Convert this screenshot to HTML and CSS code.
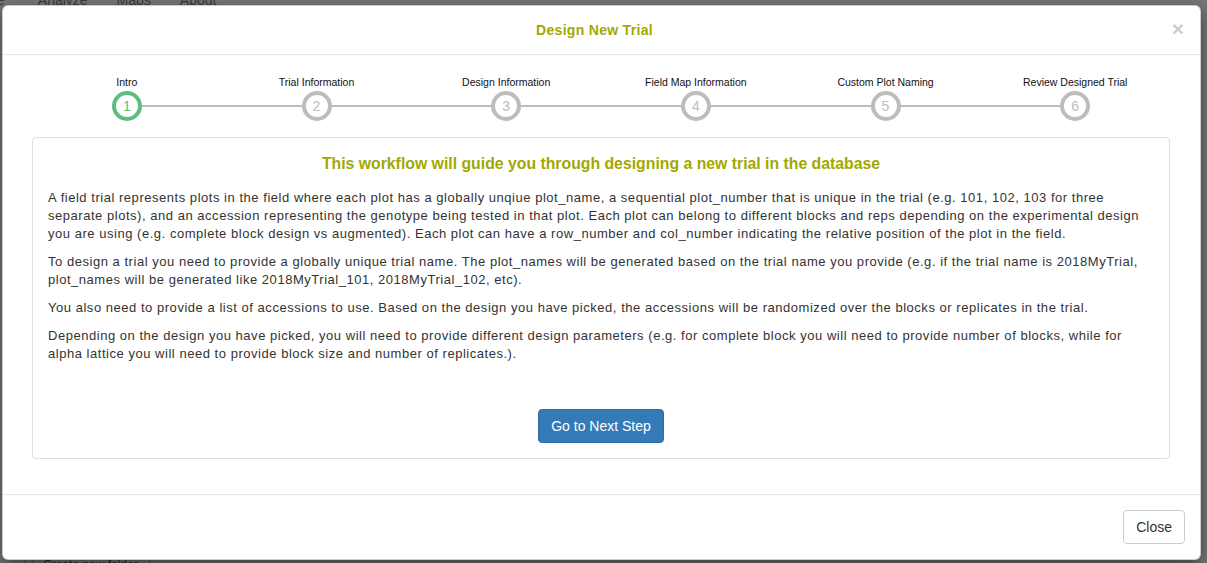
FILE: index.html
```html
<!DOCTYPE html>
<html lang="en">
<head>
<meta charset="utf-8">
<title>Design New Trial</title>
<link rel="stylesheet" href="styles.css">
</head>
<body>
<div class="page">
  <nav class="topnav">
    <span class="nav-item nav-cut">e</span>
    <span class="nav-item">Analyze</span>
    <span class="nav-item">Maps</span>
    <span class="nav-item">About</span>
  </nav>
  <div class="page-bottom">
    <div class="bottom-frame">
      <span class="folder-btn">Create new folder</span>
    </div>
  </div>
</div>

<div class="modal">
  <div class="modal-header">
    <h4 class="modal-title">Design New Trial</h4>
    <span class="close">&times;</span>
  </div>
  <div class="modal-body">
    <div class="steps">
      <div class="step active"><div class="step-label">Intro</div><div class="step-dot">1</div></div>
      <div class="step"><div class="step-label">Trial Information</div><div class="step-dot">2</div></div>
      <div class="step"><div class="step-label">Design Information</div><div class="step-dot">3</div></div>
      <div class="step"><div class="step-label">Field Map Information</div><div class="step-dot">4</div></div>
      <div class="step"><div class="step-label">Custom Plot Naming</div><div class="step-dot">5</div></div>
      <div class="step last"><div class="step-label">Review Designed Trial</div><div class="step-dot">6</div></div>
    </div>
    <div class="panel">
      <h3 class="panel-heading">This workflow will guide you through designing a new trial in the database</h3>
      <p>A field trial represents plots in the field where each plot has a globally unqiue plot_name, a sequential plot_number that is unique in the trial (e.g. 101, 102, 103 for three separate plots), and an accession representing the genotype being tested in that plot. Each plot can belong to different blocks and reps depending on the experimental design you are using (e.g. complete block design vs augmented). Each plot can have a row_number and col_number indicating the relative position of the plot in the field.</p>
      <p>To design a trial you need to provide a globally unique trial name. The plot_names will be generated based on the trial name you provide (e.g. if the trial name is 2018MyTrial, plot_names will be generated like 2018MyTrial_101, 2018MyTrial_102, etc).</p>
      <p>You also need to provide a list of accessions to use. Based on the design you have picked, the accessions will be randomized over the blocks or replicates in the trial.</p>
      <p>Depending on the design you have picked, you will need to provide different design parameters (e.g. for complete block you will need to provide number of blocks, while for alpha lattice you will need to provide block size and number of replicates.).</p>
      <div class="panel-actions">
        <button class="btn btn-primary">Go to Next Step</button>
      </div>
    </div>
  </div>
  <div class="modal-footer">
    <button class="btn btn-default">Close</button>
  </div>
</div>
</body>
</html>
```

FILE: styles.css
```css
* { box-sizing: border-box; }

html, body {
  margin: 0;
  height: 100%;
}

body {
  background: #777;
  font-family: "Liberation Sans", Arial, sans-serif;
  color: #333;
  overflow: hidden;
}

.page {
  height: 563px;
  display: flex;
  flex-direction: column;
  justify-content: space-between;
}

.topnav {
  display: flex;
  height: 6px;
  align-items: flex-end;
  font-size: 14px;
  line-height: 16px;
  color: #3a3a3a;
}

.nav-item {
  margin-right: 29px;
  margin-bottom: -2px;
}

.nav-cut { margin-left: -3px; margin-right: 33px; }

.page-bottom {
  height: 8px;
  padding-left: 24px;
  overflow: hidden;
}

.bottom-frame {
  border-left: 1px solid #5a5a5a;
  padding-left: 7px;
  height: 20px;
}

.folder-btn {
  display: inline-block;
  border-left: 1px solid #5a5a5a;
  border-right: 1px solid #5a5a5a;
  padding: 0 11px 0 10px;
  font-size: 12px;
  line-height: 14px;
  margin-top: 2px;
  color: #2a2a2a;
}

.modal {
  position: absolute;
  top: 5px;
  left: 2px;
  width: 1199px;
  background: #fff;
  border: 1px solid rgba(0,0,0,0.2);
  border-radius: 6px;
  box-shadow: 0 5px 15px rgba(0,0,0,0.5);
}

.modal-header {
  display: flex;
  align-items: flex-start;
  padding: 14px 15px;
  border-bottom: 1px solid #e5e5e5;
}

.modal-title {
  flex: 1;
  margin: 0;
  text-align: center;
  font-size: 14px;
  letter-spacing: 0.3px;
  line-height: 20px;
  font-weight: bold;
  color: #a2a800;
}

.close {
  width: 14px;
  margin-top: -2px;
  margin-right: 0;
  font-size: 21px;
  font-weight: bold;
  line-height: 21px;
  color: #000;
  opacity: 0.2;
  text-align: center;
}

.modal-body {
  padding: 21px 30px 35px 29px;
}

.steps {
  display: flex;
}

.step {
  flex: 1;
  position: relative;
  display: flex;
  flex-direction: column;
  align-items: center;
}

.step::after {
  content: "";
  position: absolute;
  left: 50%;
  right: -50%;
  top: 29px;
  height: 2px;
  background: #bdbdbd;
}

.step.last::after { display: none; }

.step-label {
  font-size: 10.5px;
  line-height: 12px;
  color: #111;
  white-space: nowrap;
}

.step-dot {
  position: relative;
  z-index: 1;
  margin-top: 3px;
  width: 30px;
  height: 30px;
  border: 4px solid #bdbdbd;
  border-radius: 50%;
  background: #fff;
  color: #bdbdbd;
  font-size: 14px;
  line-height: 22px;
  text-align: center;
}

.step.active .step-dot {
  border-color: #5dbd7f;
  color: #5dbd7f;
}

.panel {
  margin-top: 16px;
  border: 1px solid #ddd;
  border-radius: 4px;
  padding: 16px 15px 15px;
}

.panel-heading {
  margin: 0 0 15px;
  text-align: center;
  font-size: 15.8px;
  line-height: 20px;
  font-weight: bold;
  color: #a2a800;
}

.panel p {
  margin: 0 0 10px;
  font-size: 13px;
  letter-spacing: 0.53px;
  line-height: 18px;
  color: #333;
}

.panel-actions {
  margin-top: 46px;
  display: flex;
  justify-content: center;
}

.btn {
  font-family: "Liberation Sans", Arial, sans-serif;
  font-size: 14px;
  line-height: 20px;
  padding: 6px 12px;
  border: 1px solid transparent;
  border-radius: 4px;
  cursor: pointer;
}

.btn-primary {
  background: #337ab7;
  border-color: #2e6da4;
  color: #fff;
}

.btn-default {
  background: #fff;
  border-color: #ccc;
  color: #333;
}

.modal-footer {
  padding: 15px;
  border-top: 1px solid #e5e5e5;
  display: flex;
  justify-content: flex-end;
}
```
